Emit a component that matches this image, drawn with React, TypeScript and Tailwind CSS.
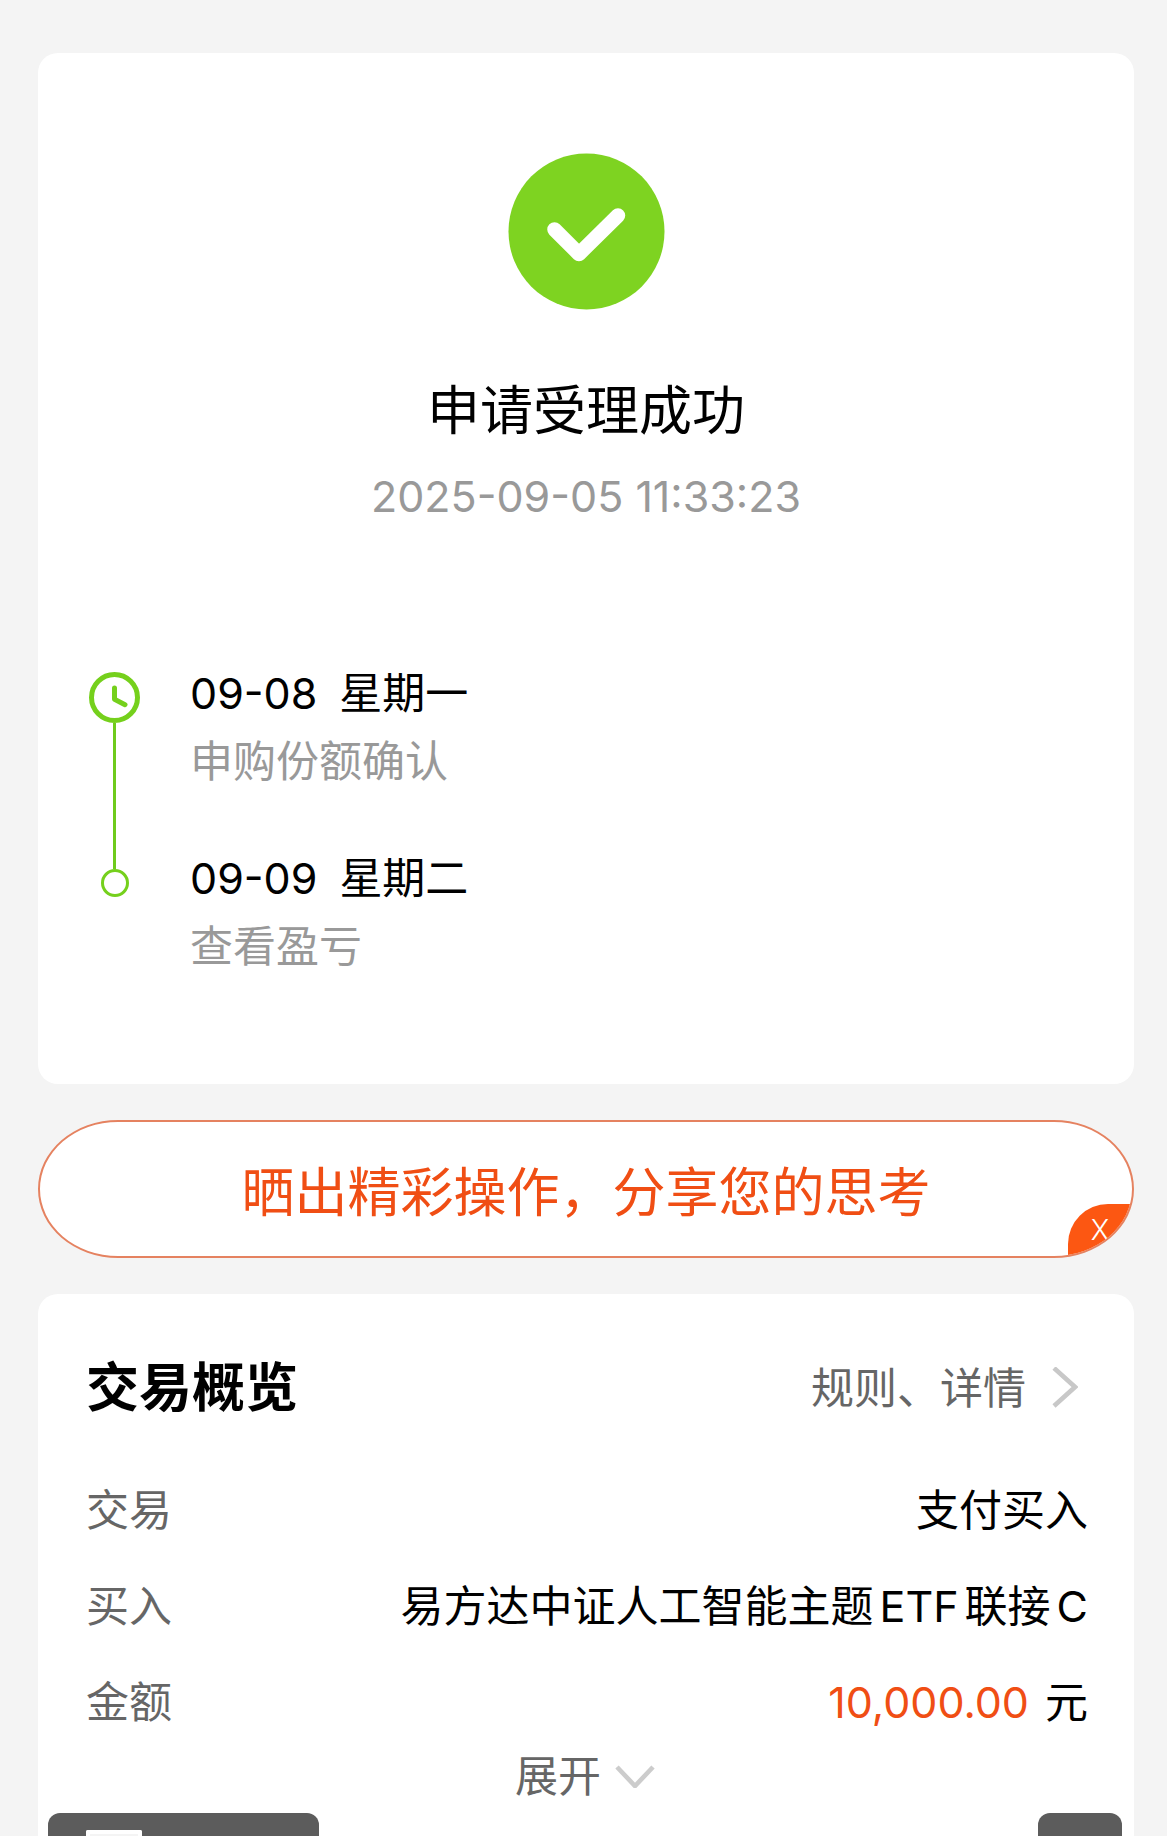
import { useState } from "react";

const steps = [
  { date: "09-08", weekday: "星期一", label: "申购份额确认" },
  { date: "09-09", weekday: "星期二", label: "查看盈亏" },
];

function SuccessIcon() {
  return (
    <svg className="h-[157px] w-[157px]" viewBox="0 0 157 157" fill="none" aria-hidden="true">
      <circle cx="78.5" cy="78.5" r="78" fill="#7ed321" />
      <path
        d="M46.5 76.5L71 101L110 62.5"
        stroke="#fff"
        strokeWidth="14.5"
        strokeLinecap="round"
        strokeLinejoin="round"
      />
    </svg>
  );
}

function ClockIcon() {
  return (
    <svg className="h-[51px] w-[51px]" viewBox="0 0 51 51" fill="none" stroke="#75d01c" aria-hidden="true">
      <circle cx="25.5" cy="25.5" r="23" strokeWidth="5" />
      <path d="M25.5 16V27.3L36 32.7" strokeWidth="5" strokeLinecap="round" strokeLinejoin="round" />
    </svg>
  );
}

function StatusCard() {
  return (
    <section className="rounded-[20px] bg-white px-[51px] pt-[100px] pb-[108px]">
      <div className="flex flex-col items-center">
        <SuccessIcon />
        <h1 className="mt-[66px] text-[53px] leading-[70px] text-black">申请受理成功</h1>
        <time className="mt-5 text-[43px] leading-[60px] text-[#999]">2025-09-05 11:33:23</time>
      </div>

      {/* Timeline */}
      <div className="mt-[137px] flex gap-[50px]">
        <div className="flex flex-col items-center pt-[9px]">
          <ClockIcon />
          <div className="h-[146px] w-[3px] bg-[#6fcb1c]" />
          <div className="h-7 w-7 rounded-full border-3 border-[#75d01c]" />
        </div>
        <ol className="flex flex-col gap-[57px] text-[43px] leading-[60px]">
          {steps.map((step) => (
            <li key={step.date} className="flex flex-col gap-2">
              <div className="flex gap-[22px] text-black">
                <span>{step.date}</span>
                <span>{step.weekday}</span>
              </div>
              <span className="text-[#999]">{step.label}</span>
            </li>
          ))}
        </ol>
      </div>
    </section>
  );
}

function ShareBanner({ onClose }: { onClose: () => void }) {
  return (
    <div className="relative overflow-hidden rounded-[80px/50%] border-2 border-[#e58260] bg-white">
      <a href="#share" className="block pt-9 pb-7 text-center text-[53px] leading-[70px] text-[#f04e14]">
        晒出精彩操作，分享您的思考
      </a>
      <button
        type="button"
        onClick={onClose}
        className="absolute right-0 bottom-0 h-[52px] w-16 rounded-tl-[40px] bg-[#fc5712] text-[28px] leading-[52px] font-light text-white"
      >
        X
      </button>
    </div>
  );
}

function OverviewCard() {
  return (
    <section className="flex flex-1 flex-col rounded-t-[20px] bg-white pt-[58px]">
      <div className="pr-[46px] pl-12">
        <div className="flex items-center justify-between">
          <h2 className="text-[53px] leading-[72px] font-bold text-black">交易概览</h2>
          <a href="#rules" className="flex items-center gap-[26px] pr-2.5 text-[43px] leading-[60px] text-[#666]">
            规则、详情
            <svg className="h-[42px] w-[26px]" viewBox="0 0 26 42" fill="none" aria-hidden="true">
              <path d="M2 1L23 20L2 39" stroke="#c8c8c8" strokeWidth="4.6" />
            </svg>
          </a>
        </div>

        <dl className="mt-14 flex flex-col gap-9 text-[43px] leading-[60px] text-black">
          <div className="flex justify-between">
            <dt className="text-[#666]">交易</dt>
            <dd>支付买入</dd>
          </div>
          <div className="flex justify-between">
            <dt className="text-[#666]">买入</dt>
            <dd>
              易方达中证人工智能主题<span className="mx-1.5">ETF</span>联接<span className="ml-1.5">C</span>
            </dd>
          </div>
          <div className="flex justify-between">
            <dt className="text-[#666]">金额</dt>
            <dd className="flex gap-4">
              <span className="text-[#f04e14]">10,000.00</span>
              <span>元</span>
            </dd>
          </div>
        </dl>
      </div>

      <button
        type="button"
        className="mt-3.5 flex items-center justify-center gap-3.5 pr-0.5 text-[43px] leading-[60px] text-[#666]"
      >
        展开
        <svg className="h-6 w-10" viewBox="0 0 40 24" fill="none" aria-hidden="true">
          <path d="M2 3L20 22L38 3" stroke="#ccc" strokeWidth="4.6" />
        </svg>
      </button>

      {/* Bottom toolbar */}
      <div className="mt-auto flex justify-between pr-3 pl-2.5">
        <div className="h-[23px] w-[271px] rounded-t-xl bg-[#5c5c5c] pt-[17px] pl-[38px]">
          <div className="h-1.5 w-14 rounded-t-xs border-4 border-b-0 border-white bg-[#f4f4f4]" />
        </div>
        <div className="h-[23px] w-[84px] rounded-t-xl bg-[#5c5c5c]" />
      </div>
    </section>
  );
}

export default function App() {
  const [showBanner, setShowBanner] = useState(true);

  return (
    <main className="flex min-h-screen flex-col gap-9 bg-[#f4f4f4] pt-[53px] pr-[33px] pl-[38px] font-['Inter','Noto_Sans_CJK_SC',sans-serif]">
      <StatusCard />
      {showBanner && <ShareBanner onClose={() => setShowBanner(false)} />}
      <OverviewCard />
    </main>
  );
}
